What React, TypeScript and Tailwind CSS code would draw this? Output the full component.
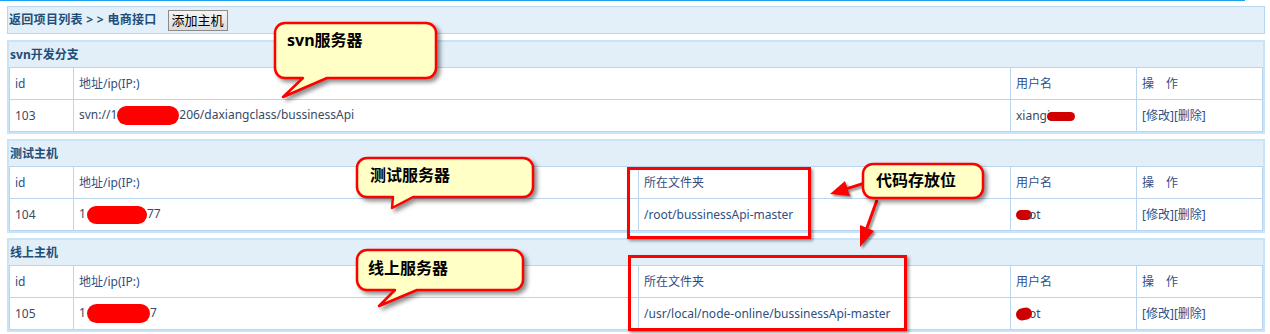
import React from "react";

type Tail = { b1: number; b2: number; tx: number; ty: number };

function Callout({
  pos,
  w,
  h,
  tail,
  text,
  textPos,
}: {
  pos: string;
  w: number;
  h: number;
  tail?: Tail;
  text: string;
  textPos: string;
}) {
  const r = 10;
  let d = `M${r} 0 H${w - r} A${r} ${r} 0 0 1 ${w} ${r} V${h - r} A${r} ${r} 0 0 1 ${w - r} ${h}`;
  if (tail) d += ` H${tail.b2} L${tail.tx} ${tail.ty} L${tail.b1} ${h}`;
  d += ` H${r} A${r} ${r} 0 0 1 0 ${h - r} V${r} A${r} ${r} 0 0 1 ${r} 0 Z`;
  const fullH = tail ? tail.ty : h;

  return (
    <div className={`absolute ${pos}`}>
      <svg
        width={w + 10}
        height={fullH + 10}
        className="absolute -left-[2px] -top-[2px] drop-shadow-[3px_3px_2px_rgba(0,0,0,0.45)]"
      >
        <path d={d} transform="translate(2 2)" fill="#ffffc6" stroke="#ff0000" strokeWidth={2.5} strokeLinejoin="round" />
      </svg>
      <div className={`absolute ${textPos} whitespace-nowrap text-[16px] leading-[20px] font-bold text-black`}>
        {text}
      </div>
    </div>
  );
}

const Blob = ({ className }: { className: string }) => (
  <span className={`inline-block rounded-full align-middle ${className}`} />
);

const cell = "border border-[#bcd5ee] bg-white pl-[5px] text-left font-normal align-middle";

function Section({
  title,
  withFolder,
  id,
  address,
  folder,
  user,
}: {
  title: string;
  withFolder?: boolean;
  id: string;
  address: React.ReactNode;
  folder?: string;
  user: React.ReactNode;
}) {
  return (
    <div className="ml-[7px] w-[1258px] border-2 border-[#c8e4f8] bg-[#e2eff9]">
      <div className="flex h-[25px] items-center pl-[1px] text-[12px] font-bold text-[#1f4e79]">{title}</div>
      <table className="w-full table-fixed border-collapse text-[12px]">
        <colgroup>
          <col className="w-[64px]" />
          <col />
          {withFolder && <col className="w-[372px]" />}
          <col className="w-[126px]" />
          <col className="w-[126px]" />
        </colgroup>
        <tbody>
          <tr className="h-[32px] text-[#2f4f86]">
            <td className={cell}>id</td>
            <td className={cell}>地址/ip(IP:)</td>
            {withFolder && <td className={cell}>所在文件夹</td>}
            <td className={cell}>用户名</td>
            <td className={cell}>操　作</td>
          </tr>
          <tr className="h-[32px] text-[#3b4a63]">
            <td className={cell}>{id}</td>
            <td className={`${cell} whitespace-nowrap`}>{address}</td>
            {withFolder && <td className={`${cell} text-[#2f4f80]`}>{folder}</td>}
            <td className={`${cell} whitespace-nowrap`}>{user}</td>
            <td className={`${cell} text-[#2f4f86]`}>[修改][删除]</td>
          </tr>
        </tbody>
      </table>
    </div>
  );
}

export default function App() {
  return (
    <div className="relative h-[334px] w-[1270px] overflow-hidden bg-white font-['Noto_Sans','Noto_Sans_CJK_SC',sans-serif]">
      {/* top line */}
      <div className="h-[1px] w-[1245px] bg-[#1aa3f3]" />

      {/* breadcrumb bar */}
      <div className="ml-[7px] mt-[5px] flex h-[28px] w-[1258px] items-center border border-[#b8d7ef] bg-[#e3eff9] pl-[1px]">
        <span className="text-[12px] font-bold tracking-[0.3px] text-[#1f4e79]">返回项目列表 &gt; &gt; 电商接口</span>
        <button className="ml-[11px] h-[21px] border border-[#8a8a8a] bg-gradient-to-b from-[#f4f4f4] to-[#dcdcdc] px-[3px] text-[13px] leading-[19px] text-black">
          添加主机
        </button>
      </div>

      <div className="mt-[6px] flex flex-col gap-[5px]">
        <Section
          title="svn开发分支"
          id="103"
          address={
            <>
              svn://1
              <Blob className="h-[19px] w-[62px] bg-[#ff0000]" />
              206/daxiangclass/bussinessApi
            </>
          }
          user={
            <>
              xiangi
              <Blob className="-ml-[3px] h-[9px] w-[28px] bg-[#d00000]" />
            </>
          }
        />
        <Section
          title="测试主机"
          withFolder
          id="104"
          address={
            <>
              1
              <Blob className="ml-[1px] h-[18px] w-[60px] bg-[#ff0000]" />
              77
            </>
          }
          folder="/root/bussinessApi-master"
          user={
            <>
              <Blob className="h-[10px] w-[16px] bg-[#cc0000]" />
              <span className="-ml-[3px]">ot</span>
            </>
          }
        />
        <Section
          title="线上主机"
          withFolder
          id="105"
          address={
            <>
              1
              <Blob className="ml-[1px] h-[19px] w-[63px] bg-[#ff0000]" />
              7
            </>
          }
          folder="/usr/local/node-online/bussinessApi-master"
          user={
            <>
              <Blob className="h-[12px] w-[16px] -rotate-12 bg-[#cc0000]" />
              <span className="-ml-[3px]">ot</span>
            </>
          }
        />
      </div>

      {/* red highlight boxes */}
      <div className="absolute left-[627px] top-[167px] h-[72px] w-[184px] border-[3px] border-[#ff0000] shadow-[2px_2px_3px_rgba(0,0,0,0.4)]" />
      <div className="absolute left-[628px] top-[255px] h-[76px] w-[279px] border-[3px] border-[#ff0000] shadow-[2px_2px_3px_rgba(0,0,0,0.4)]" />

      {/* arrows from 代码存放位 */}
      <svg width={80} height={95} className="absolute left-[820px] top-[160px] drop-shadow-[2px_2px_1px_rgba(0,0,0,0.45)]">
        <line x1={45} y1={23} x2={27} y2={28.6} stroke="#ff0000" strokeWidth={3} />
        <polygon points="10,34 30,36 25,21" fill="#ff0000" />
        <line x1={57} y1={40} x2={46.8} y2={68.2} stroke="#ff0000" strokeWidth={3} />
        <polygon points="40,87 54,71 40,65" fill="#ff0000" />
      </svg>

      {/* callouts */}
      <Callout
        pos="left-[275px] top-[23px]"
        w={161}
        h={55}
        tail={{ b1: 28, b2: 52, tx: 8, ty: 74 }}
        text="svn服务器"
        textPos="left-[12px] top-[7px]"
      />
      <Callout
        pos="left-[357px] top-[158px]"
        w={176}
        h={39}
        tail={{ b1: 36, b2: 56, tx: 35, ty: 50 }}
        text="测试服务器"
        textPos="left-[13px] top-[7px]"
      />
      <Callout
        pos="left-[357px] top-[250px]"
        w={166}
        h={40}
        tail={{ b1: 38, b2: 60, tx: 22, ty: 56 }}
        text="线上服务器"
        textPos="left-[11px] top-[8px]"
      />
      <Callout
        pos="left-[863px] top-[164px]"
        w={120}
        h={34}
        text="代码存放位"
        textPos="left-[13px] top-[6px]"
      />
    </div>
  );
}
